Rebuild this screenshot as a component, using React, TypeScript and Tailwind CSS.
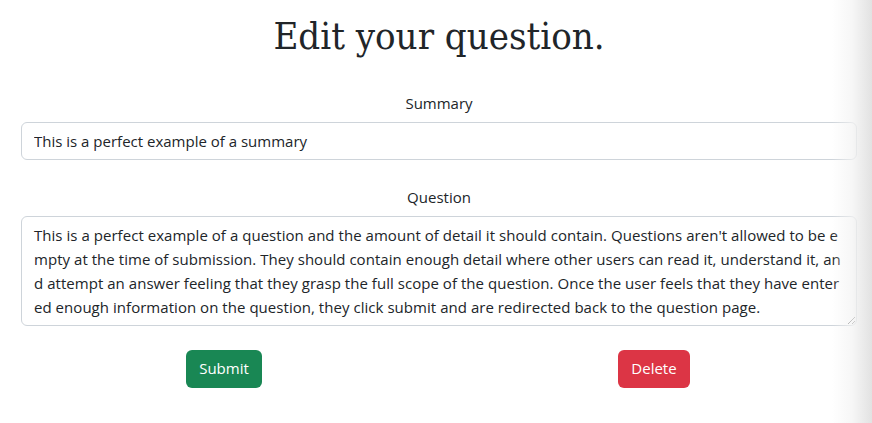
import { useState } from "react";

export default function App() {
  const [summary, setSummary] = useState("This is a perfect example of a summary");
  const [question, setQuestion] = useState(
    "This is a perfect example of a question and the amount of detail it should contain. Questions aren't allowed to be empty at the time of submission. They should contain enough detail where other users can read it, understand it, and attempt an answer feeling that they grasp the full scope of the question. Once the user feels that they have entered enough information on the question, they click submit and are redirected back to the question page."
  );

  return (
    <div className="relative min-h-[423px] w-full overflow-hidden bg-white text-[#212529] font-['Open_Sans',sans-serif]">
      <div className="pl-[21px] pr-[15px] pt-[14px]">
        <h1 className="text-center text-[38px] leading-[1.2] [font-stretch:condensed] font-['DejaVu_Serif_Condensed','DejaVu_Serif',serif] text-[#212529]">
          Edit your question.
        </h1>

        <form className="mt-[31px]" onSubmit={(e) => e.preventDefault()}>
          <label className="block text-center text-[15px] leading-6">Summary</label>
          <input
            value={summary}
            onChange={(e) => setSummary(e.target.value)}
            className="mt-[7px] block h-[38px] w-full rounded-md border border-[#ced4da] px-3 text-[15px] leading-6 outline-none"
          />

          <label className="mt-[25px] block text-center text-[15px] leading-6">Question</label>
          <textarea
            value={question}
            onChange={(e) => setQuestion(e.target.value)}
            className="mt-[7px] block h-[110px] w-full rounded-md border border-[#ced4da] px-3 py-[6px] text-[15px] leading-6 tracking-[0.04px] break-all outline-none"
          />

          <div className="-mx-3 mt-6 grid grid-cols-2">
            <div className="flex justify-center">
              <button className="h-[38px] rounded-md bg-[#198754] px-[13px] text-[15px] text-white">Submit</button>
            </div>
            <div className="flex justify-center">
              <button className="h-[38px] rounded-md bg-[#dc3545] px-[13px] text-[15px] text-white">Delete</button>
            </div>
          </div>
        </form>
      </div>

      {/* page-edge shadow */}
      <div className="pointer-events-none absolute right-0 top-0 h-full w-[40px] bg-gradient-to-r from-white/0 via-[#f3f3f3]/70 to-[#e2e2e2]" />
    </div>
  );
}
